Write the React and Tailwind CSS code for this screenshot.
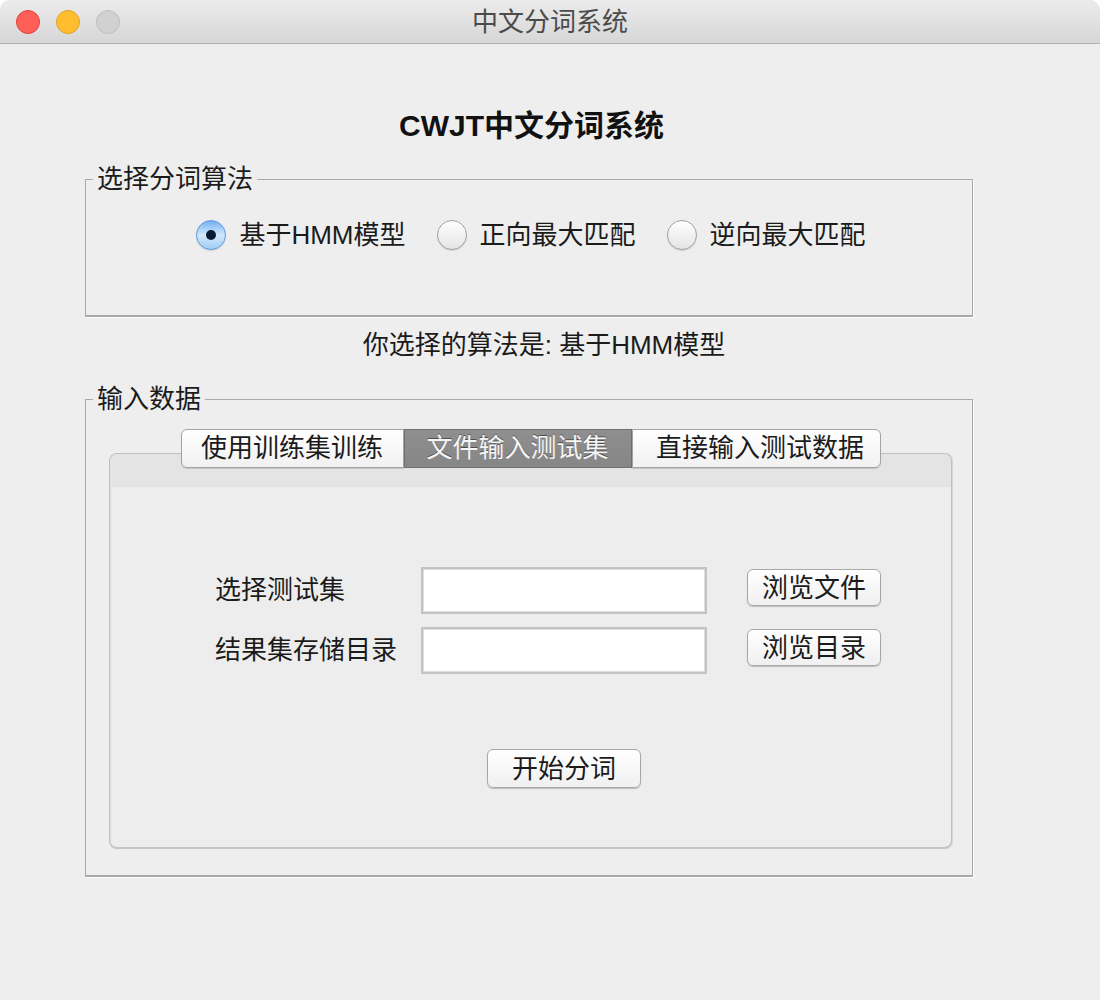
import React from 'react';

const FONT = "font-['Liberation_Sans','Noto_Sans_CJK_SC',sans-serif]";

function Radio({ checked, label }) {
  return (
    <div className="flex items-center gap-[13px]">
      {checked ? (
        <div className="w-[30px] h-[30px] rounded-full border border-[#5e9be0] bg-linear-to-b from-[#72b1f0] via-[#d3e8fb] to-[#9fcdf6] shadow-[0_1px_1px_rgba(0,0,0,0.15)] flex items-center justify-center">
          <div className="w-[10px] h-[10px] rounded-full bg-[#0b1a33]" />
        </div>
      ) : (
        <div className="w-[30px] h-[30px] rounded-full border border-[#a2a2a2] bg-linear-to-b from-white to-[#e4e4e4] shadow-[0_1px_1px_rgba(0,0,0,0.15)]" />
      )}
      <span className="text-[26px] leading-[30px] text-[#1b1b1b]">{label}</span>
    </div>
  );
}

function Button({ children, className = '' }) {
  return (
    <button className={`rounded-[6px] border border-[#a8a8a8] bg-linear-to-b from-white to-[#f0f0f0] shadow-[0_1px_1px_rgba(0,0,0,0.2)] text-[26px] leading-none text-[#1b1b1b] flex items-center justify-center ${className}`}>
      {children}
    </button>
  );
}

function Field() {
  return <div className="w-[286px] h-[47px] bg-white border-2 border-[#c3c3c3] shadow-[inset_0_0_0_1px_#dedede]" />;
}

export default function App() {
  return (
    <div className={`w-[1100px] h-[1000px] bg-white ${FONT}`}>
      <div className="h-full rounded-t-[10px] overflow-hidden bg-[#eeeeee] flex flex-col">
        {/* title bar */}
        <div className="h-[44px] shrink-0 grid grid-cols-[1fr_auto_1fr] items-center bg-linear-to-b from-[#ececec] to-[#d6d6d6] border-b border-[#b1b1b1]">
          <div className="flex items-center gap-[16px] pl-[16px]">
            <div className="w-[24px] h-[24px] rounded-full bg-[#ff5f57] border border-[#e0443e]" />
            <div className="w-[24px] h-[24px] rounded-full bg-[#ffbd2e] border border-[#dea123]" />
            <div className="w-[24px] h-[24px] rounded-full bg-[#d1d1d1] border border-[#bdbdbd]" />
          </div>
          <div className="text-[26px] leading-[30px] text-[#4b4b4b]">中文分词系统</div>
          <div />
        </div>

        <div className="pl-[85px] w-[973px] flex flex-col">
          <h1 className="mt-[64px] pl-[5px] text-center text-[30px] leading-[36px] font-bold text-[#111]">CWJT中文分词系统</h1>

          {/* 算法选择 */}
          <fieldset className="mt-[20px] h-[153px] border border-b-2 border-[#a9a9a9] shadow-[1px_1px_0_#ffffff] pt-[26px]">
            <legend className="ml-[7px] px-[4px] text-[26px] leading-[30px] text-[#1b1b1b]">选择分词算法</legend>
            <div className="flex justify-center items-center gap-[31px] pl-[4px]">
              <Radio checked label="基于HMM模型" />
              <Radio label="正向最大匹配" />
              <Radio label="逆向最大匹配" />
            </div>
          </fieldset>

          <div className="mt-[13px] pl-[30px] text-center text-[26px] leading-[30px] text-[#1b1b1b]">你选择的算法是: 基于HMM模型</div>

          {/* 输入数据 */}
          <fieldset className="mt-[24px] h-[493px] border border-b-2 border-[#a9a9a9] shadow-[1px_1px_0_#ffffff]">
            <legend className="ml-[7px] px-[4px] text-[26px] leading-[30px] text-[#1b1b1b]">输入数据</legend>

            <div className="pt-[15px] pl-[23px] pr-[20px]">
              <div className="relative z-10 flex justify-center -mb-[15px] text-[26px]">
                <div className="w-[223px] h-[39px] rounded-l-[6px] border border-[#a3a3a3] bg-linear-to-b from-white to-[#f1f1f1] shadow-[0_1px_1px_rgba(0,0,0,0.15)] flex items-center justify-center text-[#1b1b1b]">使用训练集训练</div>
                <div className="w-[228px] h-[39px] border border-[#707070] bg-linear-to-b from-[#8f8f8f] to-[#868686] flex items-center justify-center text-[#f5f5f5] [text-shadow:0_-1px_0_rgba(0,0,0,0.45)]">文件输入测试集</div>
                <div className="w-[249px] h-[39px] rounded-r-[6px] border border-[#a3a3a3] bg-linear-to-b from-white to-[#f1f1f1] shadow-[0_1px_1px_rgba(0,0,0,0.15)] flex items-center justify-center pl-[8px] text-[#1b1b1b]">直接输入测试数据</div>
              </div>

              <div className="h-[396px] rounded-[8px] border border-[#bfbfbf] border-b-2 border-b-[#c4c4c4] shadow-[inset_1px_1px_2px_rgba(0,0,0,0.08),1px_0_0_#d6d6d6] overflow-hidden bg-[#ededed] flex flex-col">
                <div className="h-[33px] bg-[#e4e4e4]" />
                <div className="pt-[80px] pl-[105px] flex flex-col text-[26px] text-[#1b1b1b]">
                  <div className="flex items-start">
                    <div className="w-[206px] leading-[47px]">选择测试集</div>
                    <Field />
                    <Button className="ml-[40px] mt-[2px] w-[134px] h-[37px]">浏览文件</Button>
                  </div>
                  <div className="flex items-start mt-[13px]">
                    <div className="w-[206px] leading-[47px]">结果集存储目录</div>
                    <Field />
                    <Button className="ml-[40px] mt-[2px] w-[134px] h-[37px]">浏览目录</Button>
                  </div>
                  <Button className="mt-[75px] ml-[272px] w-[154px] h-[39px]">开始分词</Button>
                </div>
              </div>
            </div>
          </fieldset>
        </div>
      </div>
    </div>
  );
}
